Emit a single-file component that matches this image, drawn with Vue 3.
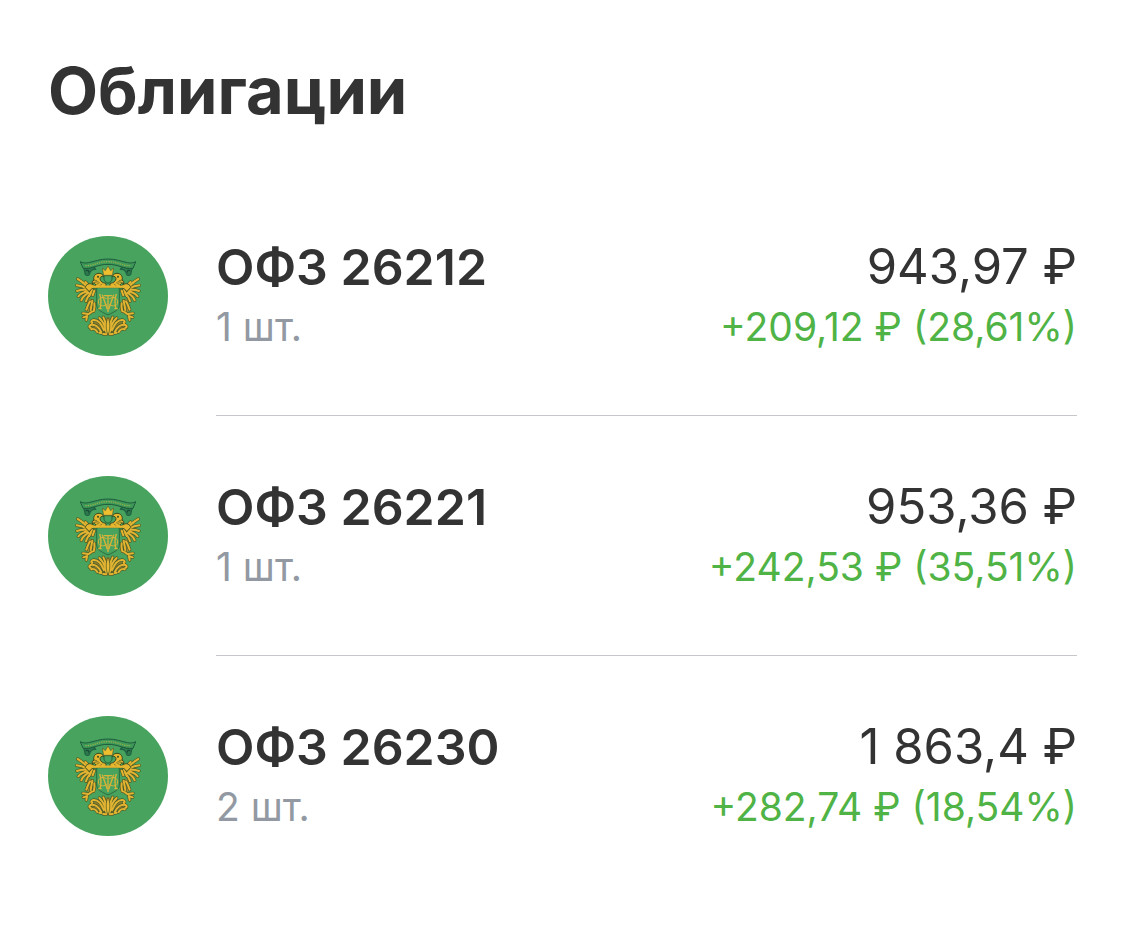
<template>
  <main class="portfolio">
    <h1 class="portfolio-title">Облигации</h1>
    <ul class="bond-list">
      <li v-for="bond in bonds" :key="bond.name" class="bond">
        <svg class="bond-logo" viewBox="24 18 360 360" aria-hidden="true">
          <circle cx="204" cy="198" r="180" fill="#48a35e" />
          <!-- both halves of the eagle are the same drawing, mirrored -->
          <g v-for="side in sides" :key="side" :transform="side" fill="none" stroke-linejoin="round" stroke-linecap="round">
            <!-- ribbon end -->
            <path d="M132 115l4 18c5 6 12 3 13-3 2-8 10-13 18-12l-6-8z" fill="#2f7a4d" stroke="#1f6443" stroke-width="4" />
            <path d="M139 122c4-2 8 0 7 4" stroke="#164b35" stroke-width="4" />
            <!-- leg and tail base under the feathers -->
            <path d="M144 206l18 4 6 30-6 10-26-8z" fill="#a58a2b" />
            <path d="M204 262l-30 8-24 14 16 20 38 12z" fill="#8a7c2b" />
            <!-- wing, leg and tail feathers -->
            <g v-for="pen in pens" :key="pen.color" :stroke="pen.color">
              <g :stroke-width="pen.width">
                <path d="M144 172c-8-8-18-18-31-25M142 176c-10-5-20-9-32-10M142 180c-10-2-20-1-31 3M144 184c-10 2-22 7-29 15M146 188c-8 5-18 12-22 23M152 190c-6 7-12 14-14 24" />
                <path d="M152 172l-16-16M156 178l-8 20M163 182l-5 14" />
                <path d="M150 214c-6 8-8 18-11 25M157 212c-2 12-4 20-5 28M163 220c2 10 0 18-2 24" />
                <path d="M144 252l-15-2M142 258l-12 4M141 260l-2 10M146 252l10-7" />
                <path d="M192 300c-6-14-18-32-32-30-8 2-7 9-3 8M183 305c-6-13-18-24-31-20-6 2-5 8 0 8M172 306c-4-7-12-11-18-8M198 304c-2-14-10-30-20-40M200 308c0-16-4-34-10-46M190 312l8 1M178 308l6 1" />
              </g>
            </g>
            <!-- head and shoulder -->
            <path d="M136 171c3-8 12-12 18-9l12 6c3-5-2-8-5-10l-3 4-2-7 6-5c-3-9 2-18 12-20 9-1 15 3 17 10-7-2-11 1-11 7 1 7 8 12 18 13v14h-40l-10 10z" fill="#e4b52e" stroke="#3b4a20" stroke-width="3" />
            <path d="M161 150l9 2M164 157l10-2M170 163l8-5M178 169l7-7" stroke="#4c5425" stroke-width="2" />
            <circle cx="174" cy="140" r="3" fill="#3b4a20" />
          </g>
          <!-- ribbon -->
          <path d="M121 95c7 4 15 5 24 3 20-4 35-11 59-11s39 7 59 11c9 2 17 1 24-3l-8 20c-27 3-44-12-75-12s-48 15-75 12z" fill="#3f9a59" stroke="#1c5a3d" stroke-width="3" stroke-linejoin="round" />
          <path d="M136 107c26 1 38-12 68-12s42 13 68 12" fill="none" stroke="#93ae4c" stroke-width="4" stroke-dasharray="4 3" />
          <!-- shield with the monogram -->
          <path d="M170 173h68v52c0 15-16 21-34 30-18-9-34-15-34-30z" fill="#48a35e" stroke="#2a6a3e" stroke-width="3" />
          <path d="M156 170h96" stroke="#e4b52e" stroke-width="7" />
          <path d="M192 137h24v11c-2 6-6 9-12 12-6-3-10-6-12-12z" fill="#48a35e" stroke="#246040" stroke-width="3" />
          <path d="M187 114l9 8 8-14 8 14 9-8-4 22h-26z" fill="#f0bf30" stroke="#56612a" stroke-width="2" stroke-linejoin="round" />
          <g fill="none" stroke="#d9b438" stroke-width="4">
            <path d="M179 192c5 15 5 30 1 44M229 192c-5 15-5 30-1 44M187 194l15 44M221 194l-15 44M175 236h10M223 236h10" />
            <path d="M192 197h24M204 197v49" />
            <path d="M200 206c-15-8-25-1-25 10s12 16 25 7M208 206c15-8 25-1 25 10s-12 16-25 7" stroke-width="3" />
          </g>
          <path d="M204 262c-7 14-7 36 0 54 7-18 7-40 0-54z" fill="#e9bb34" stroke="#4c5425" stroke-width="2" />
        </svg>
        <div class="bond-body">
          <div class="bond-info">
            <h2 class="bond-name">{{ bond.name }}</h2>
            <span class="bond-count">{{ bond.count }}</span>
          </div>
          <div class="bond-values">
            <span class="bond-price">{{ bond.price }}</span>
            <span class="bond-profit">{{ bond.profit }}</span>
          </div>
        </div>
      </li>
    </ul>
  </main>
</template>

<script setup>
const sides = ['translate(0 0)', 'translate(408 0) scale(-1 1)']

// dark outline first, gold on top
const pens = [
  { color: '#4c5b28', width: 10 },
  { color: '#e2b431', width: 6 }
]

const bonds = [
  { name: 'ОФЗ 26212', count: '1 шт.', price: '943,97 ₽', profit: '+209,12 ₽ (28,61%)' },
  { name: 'ОФЗ 26221', count: '1 шт.', price: '953,36 ₽', profit: '+242,53 ₽ (35,51%)' },
  { name: 'ОФЗ 26230', count: '2 шт.', price: '1 863,4 ₽', profit: '+282,74 ₽ (18,54%)' }
]
</script>

<style>
body {
  margin: 0;
  background: #fff;
}
</style>

<style scoped>
.portfolio {
  padding: 51px 48px 48px;
  font-family: Inter, Roboto, sans-serif;
  color: #333;
}

.portfolio-title {
  margin: 0 0 45px;
  font-size: 65px;
  line-height: 80px;
  font-weight: 700;
}

.bond-list {
  margin: 0;
  padding: 0;
  list-style: none;
}

.bond {
  display: flex;
  gap: 48px;
}

.bond-logo {
  flex: none;
  width: 120px;
  height: 120px;
  margin-top: 60px;
}

.bond-body {
  flex: 1;
  display: flex;
  justify-content: space-between;
  gap: 24px;
  padding: 61px 0 58px;
  border-bottom: 1px solid #c8c7cc;
}

.bond:last-child .bond-body {
  border-bottom: none;
}

.bond-info,
.bond-values {
  display: flex;
  flex-direction: column;
  line-height: 60px;
  white-space: nowrap;
}

.bond-values {
  align-items: flex-end;
}

.bond-name {
  margin: 0;
  font-size: 50px;
  font-weight: 600;
}

.bond-count {
  font-size: 39px;
  color: #9299a2;
}

.bond-price {
  font-size: 49px;
}

.bond-profit {
  font-size: 39px;
  color: #4fb346;
}
</style>
